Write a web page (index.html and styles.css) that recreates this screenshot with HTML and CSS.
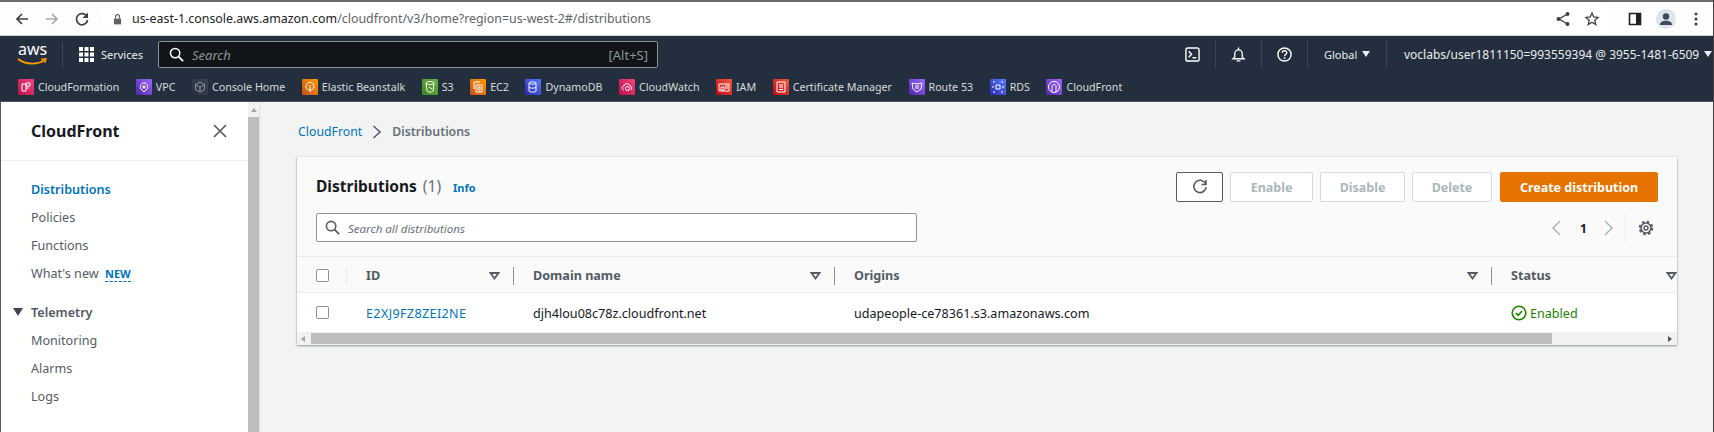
FILE: index.html
```html
<!DOCTYPE html>
<html lang="en">
<head>
    <meta charset="UTF-8">
    <title>Distributions | CloudFront</title>
    <link rel="stylesheet" href="styles.css">
</head>
<body>
    <!-- Browser toolbar -->
    <div class="browser-bar">
        <div class="browser-nav">
            <svg class="browser-icon" viewBox="0 0 16 16"><path d="M14 8H3M8 3 3 8l5 5" fill="none" stroke="#3c4043" stroke-width="1.7"/></svg>
            <svg class="browser-icon" viewBox="0 0 16 16"><path d="M2 8h11M8 3l5 5-5 5" fill="none" stroke="#a6a8ab" stroke-width="1.7"/></svg>
            <svg class="browser-icon" viewBox="0 0 16 16"><path d="M13 5.5A5.6 5.6 0 1 0 13.6 9" fill="none" stroke="#3c4043" stroke-width="1.7"/><path d="M14 1.5V7H8.5z" fill="#3c4043"/></svg>
        </div>
        <div class="url-pill">
            <svg class="lock" viewBox="0 0 10 12"><path d="M1 5.500h8V12H1z" fill="#5f6368"/><path d="M2.800 5.500V3.400a2.200 2.200 0 0 1 4.400 0v2.100" fill="none" stroke="#5f6368" stroke-width="1.300"/></svg>
            <span class="url-host">us-east-1.console.aws.amazon.com</span><span class="url-path">/cloudfront/v3/home?region=us-west-2#/distributions</span>
            <div class="url-actions">
                <svg class="browser-icon" viewBox="0 0 16 16"><path d="M12.5 3 4 8l8.500 5" fill="none" stroke="#3c4043" stroke-width="1.3"/><circle cx="12.500" cy="3" r="2" fill="#3c4043"/><circle cx="3.500" cy="8" r="2" fill="#3c4043"/><circle cx="12.500" cy="13" r="2" fill="#3c4043"/></svg>
                <svg class="browser-icon" viewBox="0 0 16 16"><path d="m8 2 1.800 4 4.300.4-3.300 2.900 1 4.300L8 11.300l-3.800 2.300 1-4.300-3.300-2.900 4.300-.4z" fill="none" stroke="#3c4043" stroke-width="1.300"/></svg>
            </div>
        </div>
        <div class="browser-tools">
            <svg class="browser-icon" viewBox="0 0 16 16"><path d="M2.500 2.500h11v11h-11z" fill="none" stroke="#202124" stroke-width="1.600"/><path d="M9 2.500h4.500v11H9z" fill="#202124"/></svg>
            <div class="avatar"><svg viewBox="0 0 20 20"><circle cx="10" cy="7.500" r="3.200" fill="#3c4a5e"/><path d="M3.800 16c.4-3 3-4.300 6.200-4.300s5.800 1.300 6.200 4.300z" fill="#3c4a5e"/></svg></div>
            <svg class="browser-dots" viewBox="0 0 4 16"><circle cx="2" cy="3" r="1.500" fill="#3c4043"/><circle cx="2" cy="8" r="1.500" fill="#3c4043"/><circle cx="2" cy="13" r="1.500" fill="#3c4043"/></svg>
        </div>
    </div>

    <!-- AWS console header -->
    <header class="console-nav">
        <div class="nav-top">
            <div class="aws-logo">
                <span>aws</span>
                <svg viewBox="0 0 30 8"><path d="M1 1c8 6 19 6 27 1" fill="none" stroke="#f90" stroke-width="1.800"/><path d="M24 1.500 29 .5 28 5" fill="none" stroke="#f90" stroke-width="1.300"/></svg>
            </div>
            <div class="services">
                <svg viewBox="0 0 15 15"><path d="M0 0h4v4H0zM5.500 0h4v4h-4zM11 0h4v4h-4zM0 5.500h4v4H0zM5.500 5.500h4v4h-4zM11 5.500h4v4h-4zM0 11h4v4H0zM5.500 11h4v4h-4zM11 11h4v4h-4z" fill="#fff"/></svg>
                <span>Services</span>
            </div>
            <div class="nav-search">
                <svg viewBox="0 0 16 16"><circle cx="6.500" cy="6.500" r="5" fill="none" stroke="#fff" stroke-width="1.600"/><path d="m10 10 5 5" stroke="#fff" stroke-width="2"/></svg>
                <span class="nav-search-text">Search</span>
                <span class="nav-search-key">[Alt+S]</span>
            </div>
            <div class="nav-right">
                <div class="nav-cell nav-cell-icon">
                    <svg viewBox="0 0 16 16"><rect x="1" y="1" width="14" height="14" rx="2" fill="none" stroke="#fff" stroke-width="1.500"/><path d="m4 4.500 3 3.200L4 11M8 11.500h4" fill="none" stroke="#fff" stroke-width="1.500"/></svg>
                </div>
                <div class="nav-cell nav-cell-icon">
                    <svg viewBox="0 0 16 16"><path d="M8 .5v2M4 10.500V7a4 4 0 0 1 8 0v3.500l2 2H2zM6 14.800h4" fill="none" stroke="#fff" stroke-width="1.400"/></svg>
                </div>
                <div class="nav-cell nav-cell-icon">
                    <svg viewBox="0 0 16 16"><circle cx="8" cy="8" r="7" fill="none" stroke="#fff" stroke-width="1.500"/><path d="M5.600 6.200c0-3 4.800-3 4.800-.1 0 1.900-2.400 1.800-2.400 3.700" fill="none" stroke="#fff" stroke-width="1.500"/><circle cx="8" cy="11.800" r="1" fill="#fff"/></svg>
                </div>
                <div class="nav-cell nav-cell-region">Global <i class="caret"></i></div>
                <div class="nav-cell nav-cell-user">voclabs/user1811150=993559394 @ 3955-1481-6509 <i class="caret"></i></div>
            </div>
        </div>
        <div class="favorites">
            <a class="fav"><span class="fav-icon pink"><svg viewBox="0 0 16 16"><path d="M4 5h4v7H4zM8 4h4v3H8zM8 9h3" fill="none" stroke="#fff"/></svg></span>CloudFormation</a>
            <a class="fav"><span class="fav-icon purple"><svg viewBox="0 0 16 16"><path d="M5 10c-2-3 1-7 4-6 3 1 3 4 2 6l-3 3zM7 9V7h2v2z" fill="none" stroke="#fff"/></svg></span>VPC</a>
            <a class="fav"><span class="fav-icon dark"><svg viewBox="0 0 16 16"><path d="m8 3 4.500 2.500v5L8 13l-4.500-2.500v-5zM3.500 5.500 8 8l4.500-2.500M8 8v5" fill="none" stroke="#879596"/></svg></span>Console Home</a>
            <a class="fav"><span class="fav-icon orange"><svg viewBox="0 0 16 16"><path d="M8 3c3 1 4 3 4 5s-2 3-4 3-4-1-4-3 1-4 4-5zM8 6v7" fill="none" stroke="#fff"/></svg></span>Elastic Beanstalk</a>
            <a class="fav"><span class="fav-icon green"><svg viewBox="0 0 16 16"><path d="M4 4c0-2 8-2 8 0l-1 8c0 1.500-5 1.500-6 0zM4 4c0 2 8 2 8 0M7 8l3 2" fill="none" stroke="#fff"/></svg></span>S3</a>
            <a class="fav"><span class="fav-icon orange"><svg viewBox="0 0 16 16"><path d="M6 6h6v7H6zM4 10V3h6M8 8h2v3H8z" fill="none" stroke="#fff"/></svg></span>EC2</a>
            <a class="fav"><span class="fav-icon blue"><svg viewBox="0 0 16 16"><path d="M4 4c0-1.500 7-1.500 7 0v8c0 1.500-7 1.500-7 0zM4 4c0 1.500 7 1.500 7 0M4 8c0 1.500 7 1.500 7 0" fill="none" stroke="#fff"/></svg></span>DynamoDB</a>
            <a class="fav"><span class="fav-icon pink"><svg viewBox="0 0 16 16"><path d="M5 11c-3-1-2-4 0-4 0-3 5-3 6 0 2 0 2 3 1 4" fill="none" stroke="#fff"/><circle cx="8.500" cy="9.500" r="2" fill="none" stroke="#fff"/></svg></span>CloudWatch</a>
            <a class="fav"><span class="fav-icon red"><svg viewBox="0 0 16 16"><path d="M3 5h10v7H3zM5 8h3v3H5zM9 7h3M9 9h3" fill="none" stroke="#fff"/></svg></span>IAM</a>
            <a class="fav"><span class="fav-icon red"><svg viewBox="0 0 16 16"><path d="M4 3h8v10H4zM6 6h4M6 8h4M6 10.500h4" fill="none" stroke="#fff"/></svg></span>Certificate Manager</a>
            <a class="fav"><span class="fav-icon purple"><svg viewBox="0 0 16 16"><path d="M3 4c3 1 7 1 10 0l-1 6-4 3-4-3zM6 7h4M6 9h4" fill="none" stroke="#fff"/></svg></span>Route 53</a>
            <a class="fav"><span class="fav-icon blue"><svg viewBox="0 0 16 16"><path d="M6 6h4v4H6zM3 3h2M11 3h2M3 13h2M11 13h2M3 7v2M13 7v2" fill="none" stroke="#fff"/></svg></span>RDS</a>
            <a class="fav"><span class="fav-icon purple"><svg viewBox="0 0 16 16"><circle cx="8" cy="8" r="5.500" fill="none" stroke="#fff"/><path d="M6 13V7c0-2 4-2 4 0v6" fill="none" stroke="#fff"/></svg></span>CloudFront</a>
        </div>
    </header>

    <div class="main">
        <!-- Side navigation -->
        <aside class="sidebar">
            <div class="side-panel">
                <div class="side-head">
                    <h2>CloudFront</h2>
                    <svg viewBox="0 0 14 14"><path d="m1 1 12 12M13 1 1 13" stroke="#545b64" stroke-width="1.700"/></svg>
                </div>
                <ul class="side-list">
                    <li class="active">Distributions</li>
                    <li>Policies</li>
                    <li>Functions</li>
                    <li>What's new <span class="new-tag">NEW</span></li>
                </ul>
                <div class="side-section"><i class="side-caret"></i>Telemetry</div>
                <ul class="side-list side-list-sub">
                    <li>Monitoring</li>
                    <li>Alarms</li>
                    <li>Logs</li>
                </ul>
                <div class="side-section side-section-last"><i class="side-caret"></i>Reports &amp; analytics</div>
            </div>
            <div class="scrollbar-v">
                <i class="arrow-up"></i>
                <div class="scrollbar-v-thumb"></div>
            </div>
        </aside>

        <main class="content">
            <nav class="breadcrumb">
                <a>CloudFront</a>
                <svg viewBox="0 0 10 14"><path d="m1.500 1 6.500 6-6.500 6" fill="none" stroke="#545b64" stroke-width="1.500"/></svg>
                <span>Distributions</span>
            </nav>

            <section class="card">
                <div class="card-head">
                    <div class="card-row">
                        <h1>Distributions <span class="count">(1)</span></h1>
                        <a class="info">Info</a>
                        <div class="actions">
                            <button class="btn btn-refresh"><svg viewBox="0 0 16 16"><path d="M13.500 4.500A6.200 6.200 0 1 0 14.200 8" fill="none" stroke="#545b64" stroke-width="1.600"/><path d="M14 1v4.500H9.500" fill="none" stroke="#545b64" stroke-width="1.600"/></svg></button>
                            <button class="btn btn-off btn-enable">Enable</button>
                            <button class="btn btn-off btn-disable">Disable</button>
                            <button class="btn btn-off btn-delete">Delete</button>
                            <button class="btn btn-primary">Create distribution</button>
                        </div>
                    </div>
                    <div class="card-row card-row-tools">
                        <div class="table-search">
                            <svg viewBox="0 0 16 16"><circle cx="6.500" cy="6.500" r="5" fill="none" stroke="#545b64" stroke-width="1.700"/><path d="m10 10 5 5" stroke="#545b64" stroke-width="2"/></svg>
                            <span>Search all distributions</span>
                        </div>
                        <div class="pager">
                            <svg viewBox="0 0 10 16"><path d="M9 1 2 8l7 7" fill="none" stroke="#aab7b8" stroke-width="1.500"/></svg>
                            <b>1</b>
                            <svg viewBox="0 0 10 16"><path d="m1 1 7 7-7 7" fill="none" stroke="#aab7b8" stroke-width="1.500"/></svg>
                            <div class="pager-gear">
                                <svg viewBox="0 0 16 16"><circle cx="8" cy="8" r="5" fill="none" stroke="#545b64" stroke-width="1.600"/><circle cx="8" cy="8" r="6.300" fill="none" stroke="#545b64" stroke-width="2" stroke-dasharray="2.600 2.350"/><circle cx="8" cy="8" r="2" fill="none" stroke="#545b64" stroke-width="1.500"/></svg>
                            </div>
                        </div>
                    </div>
                </div>

                <div class="table-row table-row-head">
                    <div class="cell-check"><i class="checkbox"></i></div>
                    <div class="cell cell-id">ID <svg class="sort" viewBox="0 0 11 8"><path d="M1.500 1h8l-4 5.500z" fill="none" stroke="#545b64" stroke-width="1.800"/></svg></div>
                    <div class="cell cell-domain">Domain name <svg class="sort" viewBox="0 0 11 8"><path d="M1.500 1h8l-4 5.500z" fill="none" stroke="#545b64" stroke-width="1.800"/></svg></div>
                    <div class="cell cell-origin">Origins <svg class="sort" viewBox="0 0 11 8"><path d="M1.500 1h8l-4 5.500z" fill="none" stroke="#545b64" stroke-width="1.800"/></svg></div>
                    <div class="cell cell-status">Status <svg class="sort" viewBox="0 0 11 8"><path d="M1.500 1h8l-4 5.500z" fill="none" stroke="#545b64" stroke-width="1.800"/></svg></div>
                </div>
                <div class="table-row table-row-data">
                    <div class="cell-check"><i class="checkbox"></i></div>
                    <div class="cell cell-id"><a>E2XJ9FZ8ZEI2NE</a></div>
                    <div class="cell cell-domain">djh4lou08c78z.cloudfront.net</div>
                    <div class="cell cell-origin">udapeople-ce78361.s3.amazonaws.com</div>
                    <div class="cell cell-status status-ok">
                        <svg viewBox="0 0 16 16"><circle cx="8" cy="8" r="6.800" fill="none" stroke="#1d8102" stroke-width="1.600"/><path d="m4.800 8 2.300 2.400 4-4.400" fill="none" stroke="#1d8102" stroke-width="1.600"/></svg>
                        Enabled
                    </div>
                </div>
                <div class="scrollbar-h">
                    <i class="arrow-left"></i>
                    <div class="scrollbar-h-thumb"></div>
                    <i class="arrow-right"></i>
                </div>
            </section>
        </main>
    </div>
</body>
</html>
```

FILE: styles.css
```css
* {
    box-sizing: border-box;
}

html, body {
    height: 432px;
    margin: 0;
    overflow: hidden;
}

body {
    font-family: "Noto Sans", sans-serif;
    font-size: 12.6px;
    color: #16191f;
    background-color: #f2f3f3;
    border-right: 1px solid #4a3f45;
}

svg {
    display: block;
    flex: none;
}

/* Browser toolbar */
.browser-bar {
    height: 36px;
    display: flex;
    align-items: center;
    background-color: #fdfdfd;
    border-top: 2px solid #6a6a6a;
    border-bottom: 1px solid #cfd2d5;
}

.browser-nav {
    width: 101px;
    flex: none;
    display: flex;
    align-items: center;
    gap: 14px;
    padding-left: 14px;
}

.browser-icon {
    width: 16px;
    height: 16px;
}

.url-pill {
    width: 1512px;
    height: 28px;
    flex: none;
    display: flex;
    align-items: center;
    background-color: #fff;
    border-radius: 14px;
    padding-left: 12px;
    font-size: 12.4px;
    white-space: nowrap;
}

.lock {
    width: 9px;
    height: 12px;
    margin-right: 10px;
}

.url-host {
    color: #202124;
}

.url-path {
    color: #5f6368;
}

.url-actions {
    margin-left: auto;
    margin-right: 13px;
    display: flex;
    gap: 13px;
}

.browser-tools {
    display: flex;
    align-items: center;
    margin-left: 14px;
}

.avatar {
    width: 20px;
    height: 20px;
    margin-left: 13px;
    border-radius: 50%;
    background-color: #dfe3ea;
}

.browser-dots {
    width: 4px;
    height: 16px;
    margin-left: 18px;
}

/* AWS console header */
.console-nav {
    height: 66px;
    background-color: #232f3e;
    border-bottom: 1px solid #4b5563;
    color: #eaeded;
}

.nav-top {
    height: 36px;
    display: flex;
    align-items: center;
}

.aws-logo {
    width: 63px;
    height: 28px;
    flex: none;
    padding-left: 18px;
    color: #fff;
    font-size: 16px;
    line-height: 17px;
    border-right: 1px solid #3b4654;
    margin-top: 2px;
}

.aws-logo svg {
    width: 30px;
    height: 8px;
    margin-left: -1px;
}

.services {
    width: 95px;
    flex: none;
    display: flex;
    align-items: center;
    gap: 7px;
    padding-left: 16px;
    font-size: 11px;
}

.services svg {
    width: 15px;
    height: 15px;
}

.nav-search {
    width: 500px;
    height: 27px;
    flex: none;
    display: flex;
    align-items: center;
    padding: 0 9px;
    background-color: #11151a;
    border: 1px solid #879596;
    border-radius: 2px;
    margin-top: 1px;
}

.nav-search svg {
    width: 15px;
    height: 15px;
    margin-left: 1px;
}

.nav-search-text {
    margin-left: 8px;
    font-style: italic;
    font-size: 13px;
    color: #879596;
}

.nav-search-key {
    margin-left: auto;
    font-size: 13px;
    color: #879596;
}

.nav-right {
    margin-left: auto;
    display: flex;
    align-items: center;
}

.nav-cell {
    height: 28px;
    display: flex;
    align-items: center;
    gap: 5px;
    white-space: nowrap;
    border-left: 1px solid #3b4654;
}

.nav-cell:first-child {
    border-left: none;
}

.nav-cell svg {
    width: 15px;
    height: 15px;
}

.nav-cell-icon {
    width: 46px;
    justify-content: center;
}

.nav-cell-region {
    width: 79px;
    padding-left: 16px;
    font-size: 11px;
}

.nav-cell-user {
    width: 327px;
    padding-left: 17px;
    font-size: 12px;
}

.caret {
    display: inline-block;
    border-style: solid;
    border-width: 6px 4px 0;
    border-color: #eaeded transparent transparent;
}

.favorites {
    height: 29px;
    display: flex;
    align-items: center;
    gap: 16.500px;
    padding-left: 18px;
}

.fav {
    display: flex;
    align-items: center;
    gap: 4px;
    font-size: 10.700px;
    color: #d5dbdb;
    white-space: nowrap;
}

.fav-icon {
    width: 16px;
    height: 16px;
    display: block;
    border-radius: 1px;
}

.pink { background: linear-gradient(45deg, #bd0f48, #f34482); }
.purple { background: linear-gradient(45deg, #4d27a8, #a166ff); }
.dark { background: linear-gradient(45deg, #2b3340, #3a4350); }
.orange { background: linear-gradient(45deg, #c8511b, #f90); }
.green { background: linear-gradient(45deg, #3f8624, #6cae3e); }
.blue { background: linear-gradient(45deg, #2e27ad, #527fff); }
.red { background: linear-gradient(45deg, #bd0816, #f05a3c); }

/* Page body */
.main {
    height: 330px;
    display: flex;
}

.sidebar {
    width: 261px;
    flex: none;
    display: flex;
    border-left: 1px solid #545b64;
    border-right: 2px solid #e8eaea;
    background-color: #fff;
}

.side-panel {
    flex: 1;
    overflow: hidden;
}

.side-head {
    height: 59px;
    display: flex;
    align-items: center;
    justify-content: space-between;
    padding: 0 21px 0 30px;
    border-bottom: 1px solid #eaeded;
}

.side-head h2 {
    margin: 0;
    font-size: 16px;
    font-weight: 700;
    color: #16191f;
}

.side-head svg {
    width: 14px;
    height: 14px;
}

.side-list {
    list-style: none;
    margin: 0;
    padding: 15px 0 0 30px;
    color: #545b64;
}

.side-list li {
    height: 28px;
    line-height: 28px;
}

.side-list .active {
    color: #0073bb;
    font-weight: 600;
}

.side-list-sub {
    padding-top: 1px;
}

.new-tag {
    margin-left: 3px;
    font-size: 11px;
    font-weight: 700;
    color: #0073bb;
    border-bottom: 1px dashed #0073bb;
}

.side-section {
    height: 28px;
    margin-top: 10px;
    display: flex;
    align-items: center;
    font-weight: 600;
    color: #545b64;
    padding-left: 12px;
}

.side-section-last {
    margin-top: 12px;
}

.side-caret {
    width: 0;
    height: 0;
    margin-right: 8px;
    border-style: solid;
    border-width: 8px 5px 0;
    border-color: #414750 transparent transparent;
}

.scrollbar-v {
    width: 11px;
    flex: none;
    background-color: #f1f1f1;
    padding-top: 6px;
}

.arrow-up {
    display: block;
    width: 0;
    margin: 0 auto;
    border-style: solid;
    border-width: 0 3px 4px;
    border-color: transparent transparent #a3a3a3;
}

.scrollbar-v-thumb {
    height: 320px;
    margin-top: 5px;
    background-color: #bdbdbd;
}

.content {
    flex: 1;
    min-width: 0;
    padding-left: 36px;
}

.breadcrumb {
    height: 55px;
    display: flex;
    align-items: center;
    padding-top: 4px;
    padding-left: 1px;
    font-size: 12.300px;
    color: #687078;
}

.breadcrumb a {
    color: #0073bb;
}

.breadcrumb svg {
    width: 10px;
    height: 14px;
    margin: 0 10px;
}

.breadcrumb span {
    font-weight: 600;
}

.card {
    width: 1380px;
    height: 188px;
    background-color: #fff;
    box-shadow: 0 1px 2px rgba(0, 28, 36, .4), 0 0 1px rgba(0, 28, 36, .2);
}

.card-head {
    height: 100px;
    padding: 15px 19px 0;
    background-color: #fafafa;
    border-bottom: 1px solid #eaeded;
}

.card-row {
    height: 30px;
    display: flex;
    align-items: center;
}

.card-head h1 {
    margin: -2px 0 0;
    font-size: 15.500px;
    font-weight: 700;
}

.count {
    font-weight: 400;
    color: #687078;
    margin-left: 2px;
}

.info {
    margin-left: 12px;
    font-size: 11px;
    font-weight: 700;
    color: #0073bb;
}

.actions {
    margin-left: auto;
    display: flex;
    gap: 7px;
}

.btn {
    height: 30px;
    padding: 0;
    font-family: inherit;
    font-size: 12.500px;
    font-weight: 700;
    background-color: #fff;
    border: 1px solid #d5dbdb;
    border-radius: 2px;
    display: flex;
    align-items: center;
    justify-content: center;
}

.btn-refresh {
    width: 47px;
    border-color: #545b64;
}

.btn-refresh svg {
    width: 16px;
    height: 16px;
}

.btn-off {
    color: #aab7b8;
}

.btn-enable { width: 83px; }
.btn-disable { width: 85px; }
.btn-delete { width: 80px; }

.btn-primary {
    width: 158px;
    margin-left: 1px;
    color: #fff;
    background-color: #e67300;
    border-color: #e67300;
}

.card-row-tools {
    margin-top: 11px;
    align-items: flex-start;
    justify-content: space-between;
}

.table-search {
    width: 601px;
    height: 29px;
    display: flex;
    align-items: center;
    gap: 8px;
    padding-left: 8px;
    background-color: #fff;
    border: 1px solid #879596;
    border-radius: 2px;
    font-style: italic;
    font-size: 11.500px;
    color: #687078;
}

.table-search span {
    padding-top: 1px;
}

.table-search svg {
    width: 15px;
    height: 15px;
}

.pager {
    display: flex;
    align-items: center;
    height: 30px;
    margin-right: 4px;
}

.pager svg {
    width: 10px;
    height: 16px;
}

.pager b {
    width: 7px;
    font-size: 12px;
    margin: 0 17px 0 19px;
}

.pager-gear {
    margin-left: 11px;
    padding-left: 12px;
    height: 30px;
    display: flex;
    align-items: center;
    border-left: 1px solid #eaeded;
}

.pager .pager-gear svg {
    width: 16px;
    height: 16px;
}

/* Table */
.table-row {
    display: flex;
    height: 39px;
    align-items: center;
}

.table-row-head {
    height: 36px;
    padding-top: 2px;
    background-color: #fafafa;
    border-bottom: 1px solid #eaeded;
    font-weight: 700;
    color: #545b64;
}

.table-row-data {
    padding-top: 1px;
}

.cell-check {
    width: 50px;
    height: 18px;
    flex: none;
    margin-right: 19px;
    padding: 2px 0 0 19px;
}

.table-row-head .cell-check {
    border-right: 1px solid #eaeded;
}

.checkbox {
    display: block;
    width: 13px;
    height: 13px;
    background-color: #fff;
    border: 1px solid #879596;
    border-radius: 2px;
}

.cell {
    height: 18px;
    flex: none;
    display: flex;
    align-items: center;
    justify-content: space-between;
    font-size: 12.600px;
}

.table-row-head .cell {
    padding-right: 13px;
    border-right: 1px solid #879596;
}

.table-row-head .cell-status {
    padding-right: 0;
    border-right: none;
}

.cell-id { width: 148px; }
.cell-domain { width: 302px; margin-left: 19px; }
.cell-origin { width: 638px; margin-left: 19px; }
.cell-status { width: 166px; margin-left: 19px; }

.cell-id a {
    color: #0073bb;
    letter-spacing: .35px;
}

.sort {
    width: 11px;
    height: 8px;
}

.status-ok {
    justify-content: flex-start;
    gap: 3px;
    color: #1d8102;
}

.status-ok svg {
    width: 16px;
    height: 16px;
}

.scrollbar-h {
    height: 13px;
    display: flex;
    align-items: center;
    background-color: #f1f1f1;
    padding: 0 5px 0 4px;
}

.arrow-left,
.arrow-right {
    display: block;
    width: 0;
    border-style: solid;
}

.arrow-left {
    border-width: 3px 4px 3px 0;
    border-color: transparent #a3a3a3 transparent transparent;
}

.arrow-right {
    margin-left: auto;
    border-width: 3px 0 3px 4px;
    border-color: transparent transparent transparent #505050;
}

.scrollbar-h-thumb {
    width: 1241px;
    height: 11px;
    margin-left: 6px;
    background-color: #bdbdbd;
}
```
